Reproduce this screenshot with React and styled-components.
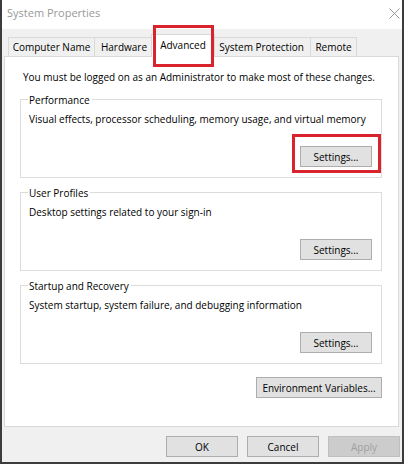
import React from 'react';
import styled, { createGlobalStyle } from 'styled-components';

const Global = createGlobalStyle`
  html, body { margin: 0; padding: 0; background: #fff; }
  * { box-sizing: border-box; }
`;

const Window = styled.div`
  width: 404px;
  height: 464px;
  background: #f0f0f0;
  border: 2px solid #3c3c3c;
  border-top: none;
  display: flex;
  flex-direction: column;
  font-family: "Open Sans", "Liberation Sans", sans-serif;
  font-size: 10px;
  color: #000;
`;

const TitleBar = styled.div`
  height: 29px;
  background: #fff;
  display: flex;
  align-items: flex-start;
  justify-content: space-between;
  padding: 5px 2px 0 5px;
`;

const Title = styled.span`
  font-size: 11px;
  line-height: 16px;
  color: #999;
`;

const CloseIcon = styled.svg`
  margin-top: 3px;
  display: block;
`;

const Content = styled.div`
  padding: 5px 3px 0 2px;
`;

const TabStrip = styled.div`
  height: 22px;
  display: flex;
  align-items: flex-end;
  padding-left: 4px;
  position: relative;
  z-index: 1;
`;

const Tab = styled.div`
  position: relative;
  width: ${p => p.$w}px;
  height: ${p => (p.$active ? 23 : 19)}px;
  margin-left: ${p => (p.$first ? 0 : p.$active ? -3 : -1)}px;
  margin-right: ${p => (p.$active ? -2 : 0)}px;
  margin-bottom: ${p => (p.$active ? -1 : 0)}px;
  padding-bottom: ${p => (p.$active ? 3 : 0)}px;
  border: 1px solid #d9d9d9;
  border-bottom: ${p => (p.$active ? 'none' : '1px solid transparent')};
  border-bottom-width: ${p => (p.$active ? 0 : 0)}px;
  background: ${p => (p.$active ? '#fff' : '#f0f0f0')};
  z-index: ${p => (p.$active ? 2 : 1)};
  display: flex;
  align-items: center;
  justify-content: center;
  white-space: nowrap;
  line-height: 14px;
`;

const Highlight = styled.span`
  position: absolute;
  top: ${p => p.$t}px;
  right: ${p => p.$r}px;
  bottom: ${p => p.$b}px;
  left: ${p => p.$l}px;
  border: 3px solid #d9232d;
  pointer-events: none;
  z-index: 3;
`;

const Panel = styled.div`
  height: 371px;
  background: #fff;
  border: 1px solid #d9d9d9;
  padding: 13px 16px 0 15px;
  display: flex;
  flex-direction: column;
`;

const Notice = styled.div`
  line-height: 14px;
  margin: 0 0 15px 3px;
  white-space: nowrap;
`;

const Group = styled.div`
  border: 1px solid #dcdcdc;
  padding: 0 9px 10px 8px;
  & + & {
    margin-top: 14px;
  }
`;

const Legend = styled.div`
  width: fit-content;
  margin: -7px 0 0 -1px;
  padding: 0 2px 0 1px;
  background: #fff;
  line-height: 14px;
`;

const Description = styled.div`
  line-height: 14px;
  margin-top: 5px;
  white-space: nowrap;
`;

const ButtonRow = styled.div`
  display: flex;
  justify-content: flex-end;
  margin-top: ${p => p.$mt}px;
`;

const HighlightWrap = styled.span`
  position: relative;
  display: inline-flex;
`;

const Button = styled.button`
  width: ${p => p.$w || 72}px;
  height: 21px;
  padding: 0;
  border: 1px solid ${p => (p.disabled ? '#bfbfbf' : '#adadad')};
  background: ${p => (p.disabled ? '#cccccc' : '#e1e1e1')};
  color: ${p => (p.disabled ? '#a0a0a0' : '#000')};
  font-family: inherit;
  font-size: 10px;
  line-height: 14px;
  white-space: nowrap;
`;

const Footer = styled.div`
  display: flex;
  justify-content: flex-end;
  gap: 9px;
  padding: 9px 2px 0 0;
`;

const tabs = [
  { label: 'Computer Name', w: 87 },
  { label: 'Hardware', w: 60 },
  { label: 'Advanced', w: 64, active: true },
  { label: 'System Protection', w: 99 },
  { label: 'Remote', w: 47 },
];

const groups = [
  { title: 'Performance', text: 'Visual effects, processor scheduling, memory usage, and virtual memory', highlight: true },
  { title: 'User Profiles', text: 'Desktop settings related to your sign-in' },
  { title: 'Startup and Recovery', text: 'System startup, system failure, and debugging information' },
];

export default function App() {
  return (
    <>
      <Global />
      <Window>
        <TitleBar>
          <Title>System Properties</Title>
          <CloseIcon width="11" height="11" viewBox="0 0 11 11">
            <path d="M0.5 0.5L10.5 10.5M10.5 0.5L0.5 10.5" stroke="#9a9a9a" strokeWidth="1" fill="none" />
          </CloseIcon>
        </TitleBar>
        <Content>
          <TabStrip>
            {tabs.map((t, i) => (
              <Tab key={t.label} $w={t.w} $active={t.active} $first={i === 0}>
                {t.label}
                {t.active && <Highlight $t={-10} $r={0} $b={-10} $l={1} />}
              </Tab>
            ))}
          </TabStrip>
          <Panel>
            <Notice>You must be logged on as an Administrator to make most of these changes.</Notice>
            {groups.map(g => (
              <Group key={g.title}>
                <Legend>{g.title}</Legend>
                <Description>{g.text}</Description>
                <ButtonRow $mt={20}>
                  {g.highlight ? (
                    <HighlightWrap>
                      <Button>Settings...</Button>
                      <Highlight $t={-12} $r={-9} $b={-6} $l={-8} />
                    </HighlightWrap>
                  ) : (
                    <Button>Settings...</Button>
                  )}
                </ButtonRow>
              </Group>
            ))}
            <ButtonRow $mt={13}>
              <Button $w={126}>Environment Variables...</Button>
            </ButtonRow>
          </Panel>
        </Content>
        <Footer>
          <Button>OK</Button>
          <Button>Cancel</Button>
          <Button disabled>Apply</Button>
        </Footer>
      </Window>
    </>
  );
}
